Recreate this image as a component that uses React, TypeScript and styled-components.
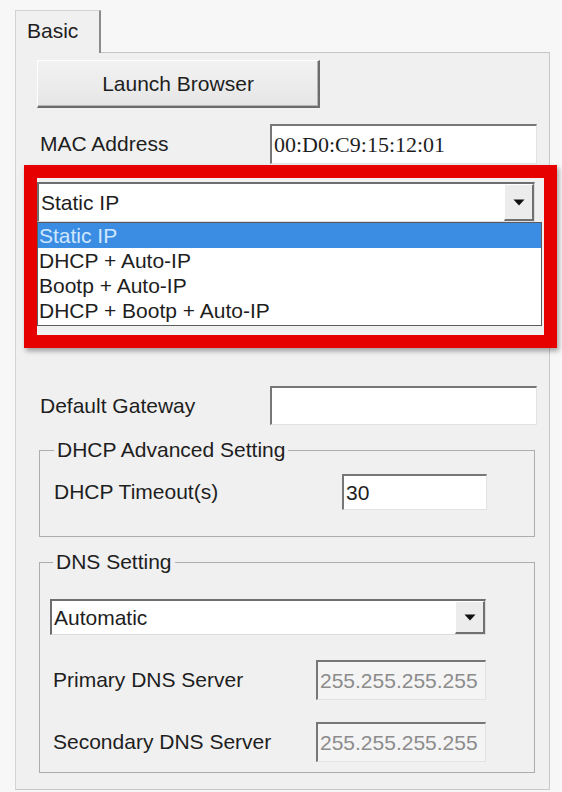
import styled, { createGlobalStyle } from "styled-components";

const GlobalStyle = createGlobalStyle`
  html, body {
    margin: 0;
    padding: 0;
    background: #f7f7f7;
  }
  body {
    font-family: "Liberation Sans", Arial, sans-serif;
    color: #1e1e1e;
  }
`;

const ipModes = [
  "Static IP",
  "DHCP + Auto-IP",
  "Bootp + Auto-IP",
  "DHCP + Bootp + Auto-IP",
];

function DownArrow() {
  return (
    <svg width="12" height="7" viewBox="0 0 12 7">
      <path d="M0.5 0.5 H11.5 L6 6.5 Z" fill="#111" />
    </svg>
  );
}

// combo box with its arrow button
function ComboBox({ value, width, height }: { value: string; width: number; height: number }) {
  return (
    <Combo $width={width} $height={height}>
      <ComboText>{value}</ComboText>
      <ComboButton>
        <DownArrow />
      </ComboButton>
    </Combo>
  );
}

function App() {
  return (
    <Page>
      <GlobalStyle />
      <TabStrip>
        <Tab>Basic</Tab>
        <TabFiller />
      </TabStrip>
      <Panel>
        <LaunchButton>Launch Browser</LaunchButton>

        <FieldRow $gap={16}>
          <Label $width={233}>MAC Address</Label>
          <TextBox $width={267} $height={40} $serif>
            00:D0:C9:15:12:01
          </TextBox>
        </FieldRow>

        <RedFrame>
          <ComboBox value="Static IP" width={498} height={40} />
          <DropList>
            {ipModes.map((mode, i) => (
              <Option key={mode} $selected={i === 0}>
                {mode}
              </Option>
            ))}
          </DropList>
        </RedFrame>

        <FieldRow $gap={38}>
          <Label $width={233}>Default Gateway</Label>
          <TextBox $width={267} $height={39} />
        </FieldRow>

        <GroupBox $top={14} $padding="13px 0 26px 11px">
          <Legend>DHCP Advanced Setting</Legend>
          <FieldRow $gap={0}>
            <Label $width={291}>DHCP Timeout(s)</Label>
            <TextBox $width={145} $height={36}>
              30
            </TextBox>
          </FieldRow>
        </GroupBox>

        <GroupBox $top={14} $padding="26px 0 10px 10px">
          <Legend>DNS Setting</Legend>
          <ComboBox value="Automatic" width={436} height={36} />
          <FieldRow $gap={25}>
            <Label $width={266}>Primary DNS Server</Label>
            <TextBox $width={170} $height={40} $disabled>
              255.255.255.255
            </TextBox>
          </FieldRow>
          <FieldRow $gap={22}>
            <Label $width={266}>Secondary DNS Server</Label>
            <TextBox $width={170} $height={40} $disabled>
              255.255.255.255
            </TextBox>
          </FieldRow>
        </GroupBox>
      </Panel>
    </Page>
  );
}

export default App;

const Page = styled.div`
  width: 562px;
  height: 792px;
  padding: 10px 0 0 15px;
  box-sizing: border-box;
  overflow: hidden;
  font-size: 21px;
`;

const TabStrip = styled.div`
  display: flex;
  width: 535px;
  height: 43px;
`;

const Tab = styled.div`
  width: 86px;
  box-sizing: border-box;
  padding: 9px 0 0 11px;
  line-height: 22px;
  background: #f0f0f0;
  border-top: 1px solid #d2d2d2;
  border-left: 1px solid #d2d2d2;
  border-right: 2px solid #8c8c8c;
`;

const TabFiller = styled.div`
  flex: 1;
  border-bottom: 1px solid #c6c6c6;
`;

const Panel = styled.div`
  width: 535px;
  box-sizing: border-box;
  padding: 7px 0 16px 21px;
  background: #f0f0f0;
  border-left: 1px solid #d4d4d4;
  border-right: 1px solid #c9c9c9;
  border-bottom: 1px solid #c9c9c9;
`;

const LaunchButton = styled.div`
  width: 283px;
  height: 48px;
  box-sizing: border-box;
  display: flex;
  align-items: center;
  justify-content: center;
  background: linear-gradient(#f2f2f2, #e6e6e6);
  border-top: 1px solid #fdfdfd;
  border-left: 1px solid #fdfdfd;
  border-right: 2px solid #6c6c6c;
  border-bottom: 2px solid #6c6c6c;
  box-shadow: inset -1px -1px 0 #b4b4b4;
`;

const FieldRow = styled.div<{ $gap: number }>`
  display: flex;
  align-items: center;
  margin-top: ${({ $gap }) => $gap}px;
`;

const Label = styled.div<{ $width: number }>`
  width: ${({ $width }) => $width}px;
  padding-left: 3px;
  box-sizing: border-box;
  line-height: 24px;
  white-space: nowrap;
`;

const TextBox = styled.div<{
  $width: number;
  $height: number;
  $serif?: boolean;
  $disabled?: boolean;
}>`
  width: ${({ $width }) => $width}px;
  height: ${({ $height }) => $height}px;
  box-sizing: border-box;
  display: flex;
  align-items: center;
  padding-left: 2px;
  white-space: nowrap;
  overflow: hidden;
  font-family: ${({ $serif }) =>
    $serif ? '"Liberation Serif", "Times New Roman", serif' : "inherit"};
  font-size: ${({ $serif }) => ($serif ? "22px" : "21px")};
  color: ${({ $disabled }) => ($disabled ? "#8c8c8c" : "#1e1e1e")};
  background: ${({ $disabled }) => ($disabled ? "#f4f4f4" : "#fff")};
  border-top: 2px solid #777;
  border-left: 2px solid #777;
  border-right: 1px solid #e2e2e2;
  border-bottom: 1px solid #e2e2e2;
`;

const RedFrame = styled.div`
  width: 533px;
  box-sizing: border-box;
  margin: 1px 0 0 -13px;
  padding: 4px 0 9px;
  border: 13px solid #e60000;
  box-shadow: 2px 3px 5px rgba(0, 0, 0, 0.35);
`;

const Combo = styled.div<{ $width: number; $height: number }>`
  width: ${({ $width }) => $width}px;
  height: ${({ $height }) => $height}px;
  box-sizing: border-box;
  display: flex;
  align-items: stretch;
  background: #fff;
  border-top: 2px solid #6e6e6e;
  border-left: 2px solid #6e6e6e;
  border-right: 1px solid #dcdcdc;
  border-bottom: 1px solid #dcdcdc;
`;

const ComboText = styled.div`
  flex: 1;
  display: flex;
  align-items: center;
  padding-left: 2px;
`;

const ComboButton = styled.div`
  width: 30px;
  box-sizing: border-box;
  display: flex;
  align-items: center;
  justify-content: center;
  background: #ececec;
  border-top: 1px solid #fff;
  border-left: 1px solid #fff;
  border-right: 2px solid #707070;
  border-bottom: 2px solid #707070;
`;

const DropList = styled.div`
  width: 505px;
  box-sizing: border-box;
  padding-bottom: 2px;
  background: #fff;
  border: 1px solid #5c5c5c;
`;

const Option = styled.div<{ $selected?: boolean }>`
  height: 25px;
  line-height: 25px;
  padding-left: 1px;
  white-space: nowrap;
  background: ${({ $selected }) => ($selected ? "#3a8de3" : "transparent")};
  color: ${({ $selected }) => ($selected ? "#cfe6ff" : "#1e1e1e")};
`;

const GroupBox = styled.fieldset<{ $top: number; $padding: string }>`
  width: 496px;
  min-inline-size: 0;
  box-sizing: border-box;
  margin: ${({ $top }) => $top}px 0 0 2px;
  padding: ${({ $padding }) => $padding};
  border: 1px solid #adadad;
`;

const Legend = styled.legend`
  padding: 0 3px;
  margin-left: 3px;
  line-height: 22px;
  font-size: 21px;
`;
